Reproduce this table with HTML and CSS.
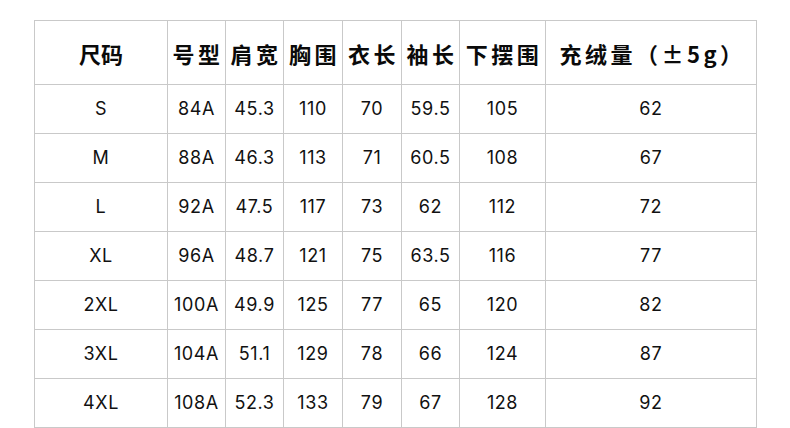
FILE: index.html
```html
<!DOCTYPE html>
<html lang="zh">
<head>
<meta charset="utf-8">
<link rel="stylesheet" href="styles.css">
</head>
<body>
<table class="size-table">
  <colgroup>
    <col class="c1"><col class="c2"><col class="c3"><col class="c4"><col class="c5"><col class="c6"><col class="c7"><col class="c8">
  </colgroup>
  <thead>
    <tr class="head">
      <th class="tight">尺码</th><th>号型</th><th>肩宽</th><th>胸围</th><th>衣长</th><th>袖长</th><th>下摆围</th><th>充绒量（±5g）</th>
    </tr>
  </thead>
  <tbody>
    <tr><td>S</td><td>84A</td><td>45.3</td><td>110</td><td>70</td><td>59.5</td><td>105</td><td>62</td></tr>
    <tr><td>M</td><td>88A</td><td>46.3</td><td>113</td><td>71</td><td>60.5</td><td>108</td><td>67</td></tr>
    <tr><td>L</td><td>92A</td><td>47.5</td><td>117</td><td>73</td><td>62</td><td>112</td><td>72</td></tr>
    <tr><td>XL</td><td>96A</td><td>48.7</td><td>121</td><td>75</td><td>63.5</td><td>116</td><td>77</td></tr>
    <tr><td>2XL</td><td>100A</td><td>49.9</td><td>125</td><td>77</td><td>65</td><td>120</td><td>82</td></tr>
    <tr><td>3XL</td><td>104A</td><td>51.1</td><td>129</td><td>78</td><td>66</td><td>124</td><td>87</td></tr>
    <tr><td>4XL</td><td>108A</td><td>52.3</td><td>133</td><td>79</td><td>67</td><td>128</td><td>92</td></tr>
  </tbody>
</table>
</body>
</html>
```
FILE: styles.css
```css
html, body {
  margin: 0;
  padding: 0;
  background: #ffffff;
}
body {
  padding: 20px 0 0 34px;
  width: 790px;
  height: 428px;
  box-sizing: border-box;
  overflow: hidden;
}
.size-table {
  border-collapse: collapse;
  table-layout: fixed;
  width: 722px;
  color: #111111;
}
.c1 { width: 133px; }
.c2 { width: 58px; }
.c3 { width: 58px; }
.c4 { width: 59px; }
.c5 { width: 59px; }
.c6 { width: 58px; }
.c7 { width: 86px; }
.c8 { width: 211px; }
.size-table th,
.size-table td {
  border: 1px solid #c9c9c9;
  padding: 0;
  text-align: center;
  vertical-align: middle;
  white-space: nowrap;
  overflow: hidden;
}
.size-table th {
  height: 63px;
  font-family: "Noto Sans CJK SC", "Noto Sans", sans-serif;
  font-weight: 700;
  font-size: 22px;
  line-height: 30px;
  letter-spacing: 3.5px;
  padding-left: 3px;
  color: #0a0a0a;
}
.size-table th.tight {
  letter-spacing: 0;
  padding-left: 0;
}
.size-table td {
  height: 48px;
  font-family: Inter, "Noto Sans", sans-serif;
  font-weight: 400;
  font-size: 18px;
  line-height: 24px;
  letter-spacing: 0.6px;
}
```
